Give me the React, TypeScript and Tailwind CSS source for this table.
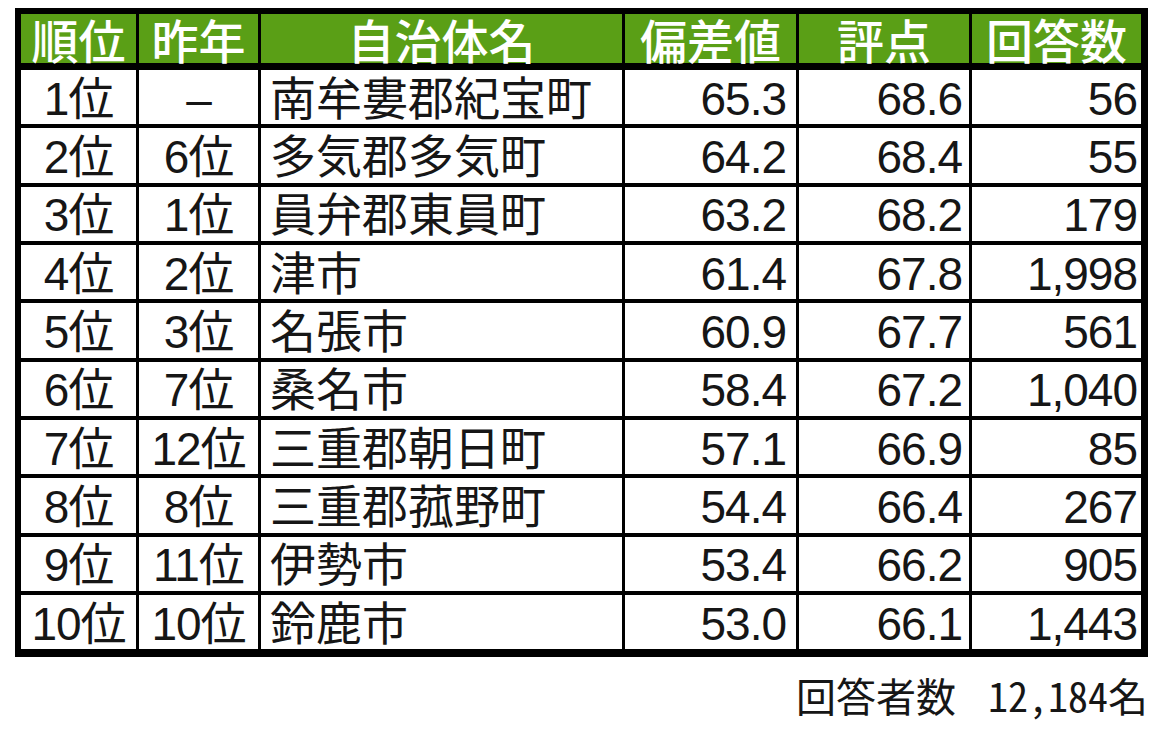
const headers = ["順位", "昨年", "自治体名", "偏差値", "評点", "回答数"];

const rows = [
  { rank: "1位", prev: "–", name: "南牟婁郡紀宝町", dev: "65.3", score: "68.6", count: "56" },
  { rank: "2位", prev: "6位", name: "多気郡多気町", dev: "64.2", score: "68.4", count: "55" },
  { rank: "3位", prev: "1位", name: "員弁郡東員町", dev: "63.2", score: "68.2", count: "179" },
  { rank: "4位", prev: "2位", name: "津市", dev: "61.4", score: "67.8", count: "1,998" },
  { rank: "5位", prev: "3位", name: "名張市", dev: "60.9", score: "67.7", count: "561" },
  { rank: "6位", prev: "7位", name: "桑名市", dev: "58.4", score: "67.2", count: "1,040" },
  { rank: "7位", prev: "12位", name: "三重郡朝日町", dev: "57.1", score: "66.9", count: "85" },
  { rank: "8位", prev: "8位", name: "三重郡菰野町", dev: "54.4", score: "66.4", count: "267" },
  { rank: "9位", prev: "11位", name: "伊勢市", dev: "53.4", score: "66.2", count: "905" },
  { rank: "10位", prev: "10位", name: "鈴鹿市", dev: "53.0", score: "66.1", count: "1,443" },
];

const cell = "bg-white h-[54.33px] flex items-center pt-[3px] leading-none text-[46px] text-[#161616]";

export default function App() {
  return (
    <div className="bg-white w-[1170px] h-[729px] pt-[8px] pl-[15px] font-['Liberation_Sans','Noto_Sans_CJK_JP',sans-serif]">
      {/* Ranking table */}
      <div className="w-[1133px] bg-black pt-[6px] pl-[6px] pr-[7px] pb-[8px]">
        <div className="grid grid-cols-[115px_119px_361px_171px_170px_169px] gap-x-[3px] gap-y-[4px]">
          {headers.map((h) => (
            <div
              key={h}
              className="bg-[#5a9f16] h-[49px] mb-[3px] flex items-center justify-center text-white font-medium text-[47px] leading-none font-['Noto_Sans_CJK_JP',sans-serif]"
            >
              {h}
            </div>
          ))}
          {rows.map((r) => (
            <div key={r.rank} className="contents">
              <div className={`${cell} justify-center tracking-[-1px]`}>{r.rank}</div>
              <div className={`${cell} justify-center tracking-[-1px]`}>{r.prev}</div>
              <div className={`${cell} pl-[9px]`}>{r.name}</div>
              <div className={`${cell} justify-end pr-[10px] tracking-[-1px]`}>{r.dev}</div>
              <div className={`${cell} justify-end pr-[7px] tracking-[-1px]`}>{r.score}</div>
              <div className={`${cell} justify-end pr-[4px] tracking-[-1px]`}>{r.count}</div>
            </div>
          ))}
        </div>
      </div>

      {/* Respondents */}
      <div className="w-[1133px] flex justify-end mt-[18px] text-[40px] leading-none text-[#161616] font-['Noto_Sans_CJK_JP',sans-serif] [font-feature-settings:'hwid']">
        <span>回答者数</span>
        <span className="ml-[32px]">12,184</span>
        <span>名</span>
      </div>
    </div>
  );
}
